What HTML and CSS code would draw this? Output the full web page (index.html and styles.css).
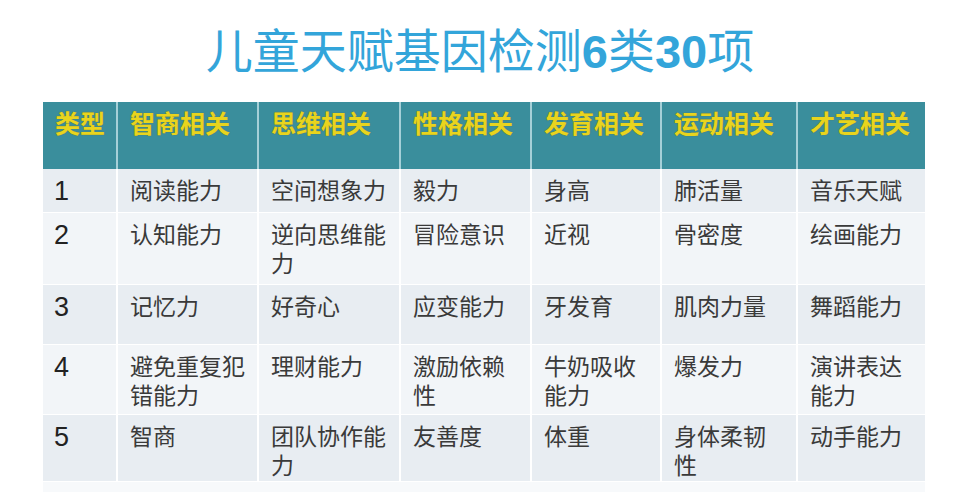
FILE: index.html
```html
<!DOCTYPE html>
<html lang="zh">
<head>
<meta charset="utf-8">
<title>儿童天赋基因检测6类30项</title>
<link rel="stylesheet" href="styles.css">
</head>
<body>
<div class="page">
  <h1 class="title">儿童天赋基因检测<b>6</b>类<b>30</b>项</h1>
  <div class="table">
    <div class="row head">
      <div class="cell">类型</div>
      <div class="cell">智商相关</div>
      <div class="cell">思维相关</div>
      <div class="cell">性格相关</div>
      <div class="cell">发育相关</div>
      <div class="cell">运动相关</div>
      <div class="cell">才艺相关</div>
    </div>
    <div class="row dark">
      <div class="cell num">1</div>
      <div class="cell">阅读能力</div>
      <div class="cell">空间想象力</div>
      <div class="cell">毅力</div>
      <div class="cell">身高</div>
      <div class="cell">肺活量</div>
      <div class="cell">音乐天赋</div>
    </div>
    <div class="row light">
      <div class="cell num">2</div>
      <div class="cell">认知能力</div>
      <div class="cell">逆向思维能力</div>
      <div class="cell">冒险意识</div>
      <div class="cell">近视</div>
      <div class="cell">骨密度</div>
      <div class="cell">绘画能力</div>
    </div>
    <div class="row dark">
      <div class="cell num">3</div>
      <div class="cell">记忆力</div>
      <div class="cell">好奇心</div>
      <div class="cell">应变能力</div>
      <div class="cell">牙发育</div>
      <div class="cell">肌肉力量</div>
      <div class="cell">舞蹈能力</div>
    </div>
    <div class="row light">
      <div class="cell num">4</div>
      <div class="cell">避免重复犯错能力</div>
      <div class="cell">理财能力</div>
      <div class="cell">激励依赖性</div>
      <div class="cell">牛奶吸收能力</div>
      <div class="cell">爆发力</div>
      <div class="cell">演讲表达能力</div>
    </div>
    <div class="row dark">
      <div class="cell num">5</div>
      <div class="cell">智商</div>
      <div class="cell">团队协作能力</div>
      <div class="cell">友善度</div>
      <div class="cell">体重</div>
      <div class="cell">身体柔韧性</div>
      <div class="cell">动手能力</div>
    </div>
  </div>
  <div class="shade"></div>
</div>
</body>
</html>
```
FILE: styles.css
```css
html, body {
  margin: 0;
  padding: 0;
  background: #ffffff;
}
.page {
  width: 960px;
  height: 498px;
  overflow: hidden;
  font-family: "Noto Sans CJK SC", "Noto Sans", sans-serif;
}
.title {
  margin: 0;
  padding-top: 18px;
  height: 60px;
  line-height: 60px;
  text-align: center;
  font-size: 47px;
  font-weight: 400;
  color: #33a5da;
}
.title b {
  font-family: "Liberation Sans", Arial, sans-serif;
  font-weight: 700;
}
.table {
  margin: 24px 0 0 43px;
  width: 882px;
  display: grid;
  grid-template-columns: 75px 141px 142px 131px 130px 136px 127px;
  grid-template-rows: 67px 44px 72px 60px 70px 67px;
}
.row {
  display: contents;
}
.cell {
  box-sizing: border-box;
  padding: 6px 10px 0 12px;
  font-size: 23px;
  line-height: 29px;
  color: #3a3a3a;
  border-right: 2px solid #ffffff;
  border-bottom: 1px solid #ffffff;
}
.cell:last-child {
  border-right: none;
}
.head .cell {
  background: #3a8e9c;
  color: #e8d41e;
  font-weight: 700;
  font-size: 25px;
  line-height: 32px;
  padding-top: 4px;
  text-shadow: 0 0 1px #6b6a1e;
  border-right: 2px solid #a5d0d8;
  border-bottom: none;
}
.head .cell:last-child {
  border-right: none;
}
.dark .cell {
  background: #e8edf2;
}
.light .cell {
  background: #f2f5f8;
}
.row .num {
  font-family: "Liberation Sans", Arial, sans-serif;
  font-size: 27px;
  padding-top: 8px;
  padding-left: 11px;
  color: #222222;
}
.shade {
  margin-left: 43px;
  width: 882px;
  height: 10px;
  background: #f7f9fb;
}
```
